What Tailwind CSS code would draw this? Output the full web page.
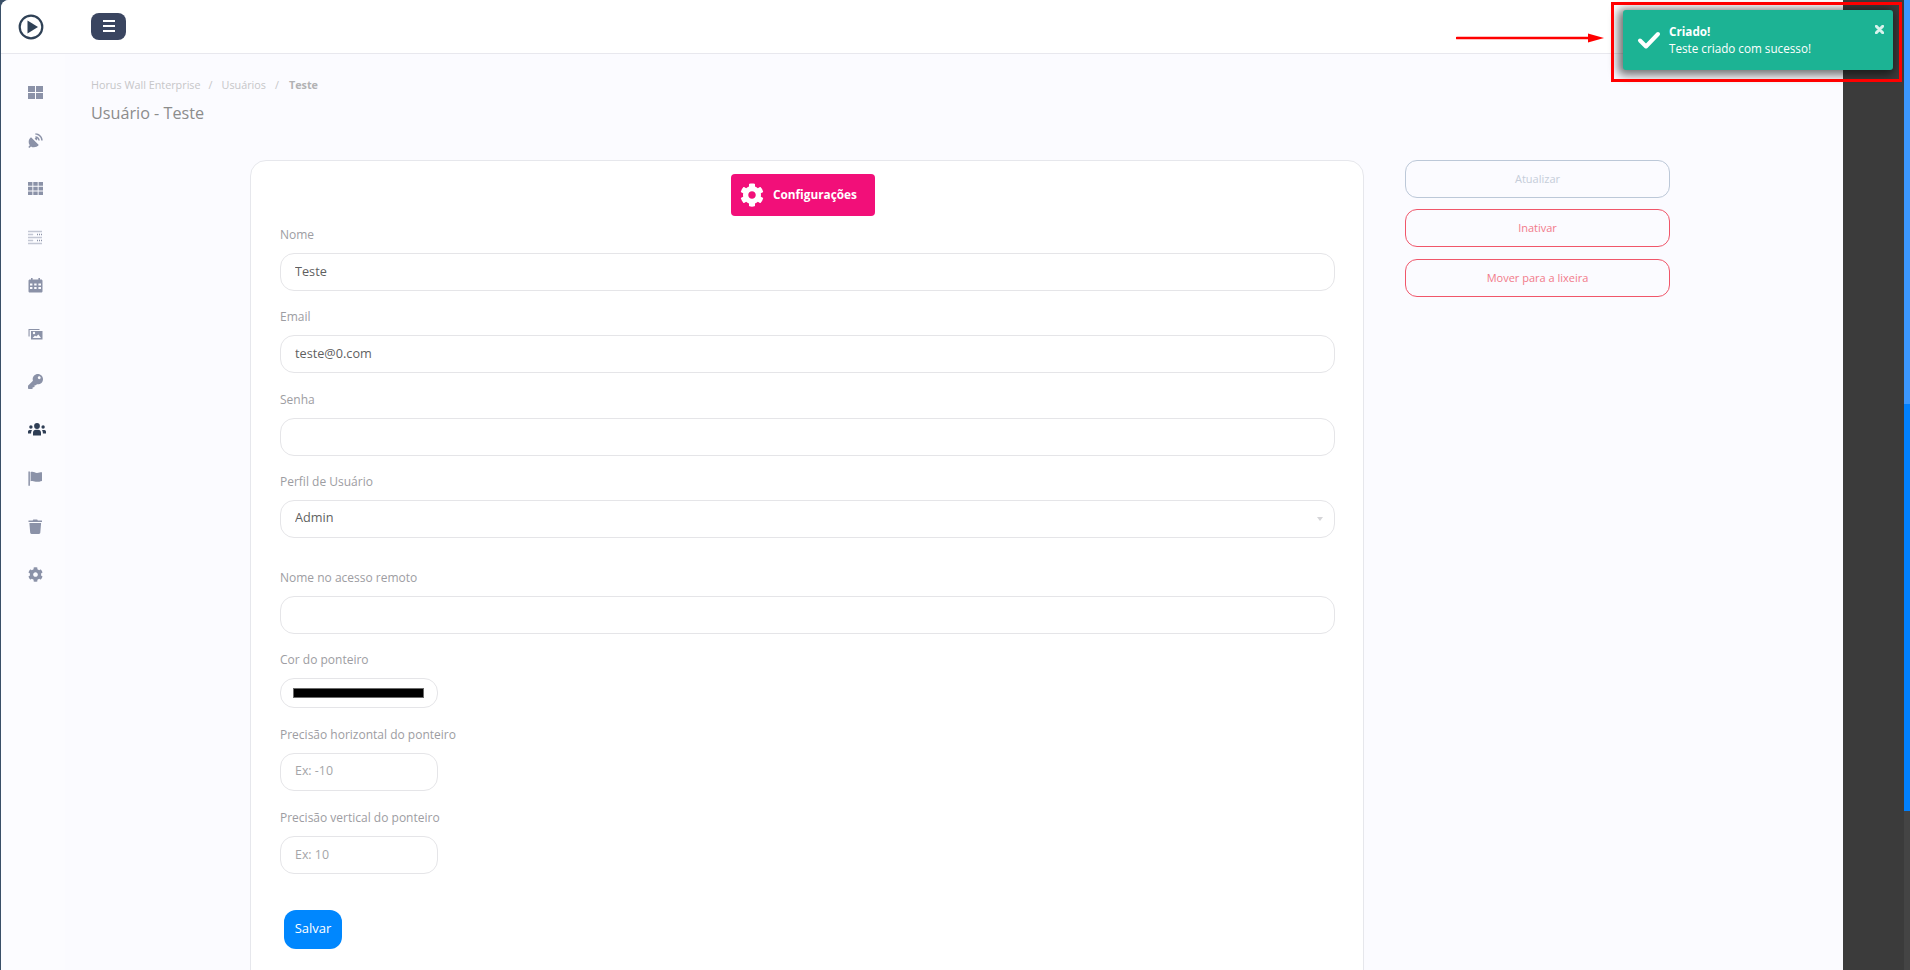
<!DOCTYPE html>
<html lang="pt-BR">
  <head>
    <meta charset="UTF-8" />
    <meta name="viewport" content="width=device-width, initial-scale=1.0" />
    <title>Usuário - Teste</title>
    <script src="https://cdn.jsdelivr.net/npm/@tailwindcss/browser@4"></script>
  </head>
  <body class="bg-[#3a5068] font-['Open_Sans',sans-serif] overflow-hidden">
    <div class="relative flex h-[970px] w-[1910px] overflow-hidden">
      <!-- pagina -->
      <div class="ml-px flex w-[1842px] flex-col overflow-hidden rounded-tl-lg bg-[#fbfbff]">
        <header class="flex h-[54px] shrink-0 items-center border-b border-[#e8e8ee] bg-white">
          <div class="flex w-[90px] pl-[17px]">
            <svg class="h-[26px] w-[26px]" viewBox="0 0 26 26">
              <circle cx="13" cy="13" r="11.3" fill="none" stroke="#2f4156" stroke-width="2.2" />
              <path d="M9.5 6.5 L20 13 L9.5 19.5 Z" fill="#2f4156" />
            </svg>
          </div>
          <button class="mb-[1px] flex h-[27px] w-[35px] flex-col items-center justify-center gap-[3px] rounded-lg bg-[#3a4560]">
            <span class="h-[2px] w-[12px] bg-white"></span>
            <span class="h-[2px] w-[12px] bg-white"></span>
            <span class="h-[2px] w-[12px] bg-white"></span>
          </button>
        </header>

        <div class="flex min-h-0 flex-1">
          <!-- sidebar -->
          <nav class="flex w-[64px] shrink-0 flex-col gap-[33.2px] bg-[#fcfcff] pl-[27px] pt-[31px] text-[#8b92a8]">
            <svg class="h-[15px] w-[15px]" viewBox="0 0 15 15" fill="currentColor"><path d="M0 1h7v6H0zM8 1h7v6H8zM0 8h7v6H0zM8 8h7v6H8z" /></svg>
            <svg class="h-[15px] w-[15px]" viewBox="0 0 15 15" fill="currentColor">
              <path d="M3 4.2 10.8 12C8.8 14.3 5.3 15 3 13.4L1.4 15 .3 14 1.8 12.3C-.2 9.6.6 6 3 4.2z" />
              <path d="M6.6 5.6 8.3 4.4 9.6 5.7 8.4 7.4z" />
              <path d="M7.4.3c4 0 7.3 3.3 7.3 7.3h-1.5c0-3.2-2.6-5.8-5.8-5.8z" />
              <path d="M7.4 3.2c2.4 0 4.4 2 4.4 4.4h-1.5c0-1.6-1.3-2.9-2.9-2.9z" />
            </svg>
            <svg class="h-[15px] w-[15px]" viewBox="0 0 15 15" fill="currentColor"><path d="M0 1h4.4v3.8H0zM5.3 1h4.4v3.8H5.3zM10.6 1H15v3.8h-4.4zM0 5.7h4.4v3.8H0zM5.3 5.7h4.4v3.8H5.3zM10.6 5.7H15v3.8h-4.4zM0 10.4h4.4v3.6H0zM5.3 10.4h4.4v3.6H5.3zM10.6 10.4H15v3.6h-4.4z" /></svg>
            <svg class="h-[15px] w-[15px]" viewBox="0 0 15 15" fill="none" stroke="currentColor" stroke-width="1.4" stroke-dasharray="1 1"><path d="M.5 1.5h13.6M.5 4.5h4.6M9 4.5h5M.5 7.5h13.6M.5 10.5h4.6M9 10.5h5M.5 13.5h13.6" /></svg>
            <svg class="h-[15px] w-[15px]" viewBox="0 0 15 15" fill="currentColor">
              <path fill-rule="evenodd" d="M3 0h1.6v1.6h5.8V0H12v1.6h1.2c.7 0 1.3.6 1.3 1.3v10.3c0 .7-.6 1.3-1.3 1.3H1.8c-.7 0-1.3-.6-1.3-1.3V2.9c0-.7.6-1.3 1.3-1.3H3zM2 5.4v2h2.4v-2zm4.2 0v2h2.4v-2zm4.2 0v2H13v-2zM2 9v2h2.4V9zm4.2 0v2h2.4V9zm4.2 0v2H13V9z" />
            </svg>
            <svg class="h-[15px] w-[15px]" viewBox="0 0 15 15" fill="currentColor">
              <path d="M.5 3h11v1H1.6v6.5H.5z" />
              <path fill-rule="evenodd" d="M3 5h11.5v8.5H3zm1.6 7h8.4L10.4 8.4 8.2 10.6 7 9.6zM6 8.2a1.2 1.2 0 1 0 0-2.4 1.2 1.2 0 0 0 0 2.4z" />
            </svg>
            <svg class="h-[15px] w-[15px]" viewBox="0 0 512 512" fill="currentColor"><path d="M512 176.001C512 273.203 433.202 352 336 352c-11.22 0-22.19-1.062-32.827-3.069l-24.012 27.014A23.999 23.999 0 0 1 261.223 384H224v40c0 13.255-10.745 24-24 24h-40v40c0 13.255-10.745 24-24 24H24c-13.255 0-24-10.745-24-24v-78.059c0-6.365 2.529-12.47 7.029-16.971l161.802-161.802C163.108 213.814 160 195.271 160 176 160 78.798 238.797.001 335.999 0 433.488-.001 512 78.511 512 176.001zM336 128c0 26.51 21.49 48 48 48s48-21.49 48-48-21.49-48-48-48-48 21.49-48 48z" /></svg>
            <svg class="h-[15px] w-[18px]" viewBox="0 0 18 15" fill="#2f3e55">
              <circle cx="9" cy="4" r="2.9" /><circle cx="2.9" cy="5" r="1.7" /><circle cx="15.1" cy="5" r="1.7" />
              <path d="M5 13.5v-2.7C5 9 6.2 7.8 8 7.8h2c1.8 0 3 1.2 3 3v2.7zM0 11.5V9.8c0-.9.7-1.7 1.6-1.7h1.3c.4 0 .8.1 1.1.4-.7.7-.9 1.4-.9 3zM18 11.5V9.8c0-.9-.7-1.7-1.6-1.7h-1.3c-.4 0-.8.1-1.1.4.7.7.9 1.4.9 3z" />
            </svg>
            <svg class="h-[15px] w-[15px]" viewBox="0 0 15 15" fill="currentColor"><path d="M.4.4h1.5v14.3H.4zM2.6 1.1c2.8-1 4.1.8 6.4.8 1.8 0 3-.6 5-.6v8.6c-2 .5-3.2.9-5 .9-2.3 0-3.6-1.4-6.4-.6z" /></svg>
            <svg class="h-[15px] w-[15px]" viewBox="0 0 15 15" fill="currentColor"><path d="M.5 1.6h4.2L5.3.4h3.9l.6 1.2h4.2v1.5H.5zM1.4 4.1h11.7l-.8 9.7c-.1.7-.6 1.2-1.3 1.2H3.5c-.7 0-1.2-.5-1.3-1.2z" /></svg>
            <svg class="h-[15px] w-[15px]" viewBox="0 0 512 512" fill="currentColor"><path d="M487.4 315.7l-42.6-24.6c4.3-23.2 4.3-47 0-70.2l42.6-24.6c4.9-2.8 7.1-8.6 5.5-14-11.1-35.6-30-67.8-54.7-94.6-3.8-4.1-10-5.1-14.8-2.3L380.8 110c-17.9-15.4-38.5-27.3-60.8-35.1V25.8c0-5.6-3.9-10.5-9.4-11.7-36.7-8.2-74.3-7.8-109.2 0-5.5 1.2-9.4 6.1-9.4 11.7V75c-22.2 7.9-42.8 19.8-60.8 35.1L88.7 85.5c-4.9-2.8-11-1.9-14.8 2.3-24.7 26.7-43.6 58.9-54.7 94.6-1.7 5.4.6 11.2 5.5 14L67.3 221c-4.3 23.2-4.3 47 0 70.2l-42.6 24.6c-4.9 2.8-7.1 8.6-5.5 14 11.1 35.6 30 67.8 54.7 94.6 3.8 4.1 10 5.1 14.8 2.3l42.6-24.6c17.9 15.4 38.5 27.3 60.8 35.1v49.2c0 5.6 3.9 10.5 9.4 11.7 36.7 8.2 74.3 7.8 109.2 0 5.5-1.2 9.4-6.1 9.4-11.7v-49.2c22.2-7.9 42.8-19.8 60.8-35.1l42.6 24.6c4.9 2.8 11 1.9 14.8-2.3 24.7-26.7 43.6-58.9 54.7-94.6 1.5-5.5-.7-11.3-5.6-14.1zM256 336c-44.1 0-80-35.9-80-80s35.9-80 80-80 80 35.9 80 80-35.9 80-80 80z" /></svg>
          </nav>

          <!-- conteudo -->
          <main class="min-w-0 flex-1 pl-[26px]">
            <div class="mt-[23px] flex h-[16px] items-center text-[10.8px] text-[#c6c6c8]">
              <span>Horus Wall Enterprise</span>
              <span class="ml-[8px]">/</span>
              <span class="ml-[9px]">Usuários</span>
              <span class="ml-[9px]">/</span>
              <span class="ml-[10px] font-bold text-[#b2b2b4]">Teste</span>
            </div>
            <h1 class="mt-[8px] h-[24px] text-[16.2px] leading-[24px] text-[#8c8c8c]">Usuário - Teste</h1>

            <div class="ml-[159px] mt-[35px] flex items-start gap-[41px]">
              <!-- card -->
              <section class="h-[900px] w-[1114px] shrink-0 rounded-t-2xl border border-[#e6e7ec] bg-white pl-[29px] pr-[28px] pt-[13px] text-[12px]">
                <div class="flex justify-center">
                  <button class="-ml-[9px] flex h-[42px] w-[144px] items-center rounded-[4px] bg-[#f20f79] pl-[9px] text-[11.8px] font-bold text-white">
                    <svg class="h-[24px] w-[24px]" viewBox="0 0 512 512" fill="currentColor"><path d="M487.4 315.7l-42.6-24.6c4.3-23.2 4.3-47 0-70.2l42.6-24.6c4.9-2.8 7.1-8.6 5.5-14-11.1-35.6-30-67.8-54.7-94.6-3.8-4.1-10-5.1-14.8-2.3L380.8 110c-17.9-15.4-38.5-27.3-60.8-35.1V25.8c0-5.6-3.9-10.5-9.4-11.7-36.7-8.2-74.3-7.8-109.2 0-5.5 1.2-9.4 6.1-9.4 11.7V75c-22.2 7.9-42.8 19.8-60.8 35.1L88.7 85.5c-4.9-2.8-11-1.9-14.8 2.3-24.7 26.7-43.6 58.9-54.7 94.6-1.7 5.4.6 11.2 5.5 14L67.3 221c-4.3 23.2-4.3 47 0 70.2l-42.6 24.6c-4.9 2.8-7.1 8.6-5.5 14 11.1 35.6 30 67.8 54.7 94.6 3.8 4.1 10 5.1 14.8 2.3l42.6-24.6c17.9 15.4 38.5 27.3 60.8 35.1v49.2c0 5.6 3.9 10.5 9.4 11.7 36.7 8.2 74.3 7.8 109.2 0 5.5-1.2 9.4-6.1 9.4-11.7v-49.2c22.2-7.9 42.8-19.8 60.8-35.1l42.6 24.6c4.9 2.8 11 1.9 14.8-2.3 24.7-26.7 43.6-58.9 54.7-94.6 1.5-5.5-.7-11.3-5.6-14.1zM256 336c-44.1 0-80-35.9-80-80s35.9-80 80-80 80 35.9 80 80-35.9 80-80 80z" /></svg>
                    <span class="ml-[9px]">Configurações</span>
                  </button>
                </div>

                <form class="mt-[8.5px] text-[#9d9da2]">
                  <label class="block h-[20px] leading-[20px]">Nome</label>
                  <input class="mt-[8px] block h-[38px] w-full rounded-[14px] border border-[#e5e5e8] bg-white px-[14px] pb-[2px] text-[12.7px] text-[#5f5f5f] outline-none" value="Teste" />

                  <label class="mt-[16.5px] block h-[20px] leading-[20px]">Email</label>
                  <input class="mt-[8px] block h-[38px] w-full rounded-[14px] border border-[#e5e5e8] bg-white px-[14px] pb-[2px] text-[12.7px] text-[#5f5f5f] outline-none" value="teste@0.com" />

                  <label class="mt-[16.5px] block h-[20px] leading-[20px]">Senha</label>
                  <input type="password" class="mt-[8px] block h-[38px] w-full rounded-[14px] border border-[#e5e5e8] bg-white px-[14px] pb-[2px] text-[12.7px] text-[#5f5f5f] outline-none" />

                  <label class="mt-[16.5px] block h-[20px] leading-[20px]">Perfil de Usuário</label>
                  <div class="relative mt-[8px]">
                    <select class="block h-[38px] w-full appearance-none rounded-[14px] border border-[#e5e5e8] bg-white px-[14px] pb-[2px] text-[12.7px] text-[#5f5f5f] outline-none">
                      <option>Admin</option>
                    </select>
                    <span class="absolute right-[12px] top-[17px] h-0 w-0 border-x-[3px] border-t-[4px] border-x-transparent border-t-[#d5d5d8]"></span>
                  </div>

                  <label class="mt-[30px] block h-[20px] leading-[20px]">Nome no acesso remoto</label>
                  <input class="mt-[8px] block h-[38px] w-full rounded-[14px] border border-[#e5e5e8] bg-white px-[14px] pb-[2px] text-[12.7px] text-[#5f5f5f] outline-none" />

                  <label class="mt-[16px] block h-[20px] leading-[20px]">Cor do ponteiro</label>
                  <div class="mt-[8px] flex h-[30px] w-[158px] items-center justify-center rounded-[14px] border border-[#e5e5e8] bg-white pr-[2px]">
                    <span class="h-[10px] w-[131px] border border-[#6b6b6b] bg-black"></span>
                  </div>

                  <label class="mt-[16.5px] block h-[20px] leading-[20px]">Precisão horizontal do ponteiro</label>
                  <input class="mt-[8px] block h-[38px] w-[158px] rounded-[14px] border border-[#e5e5e8] bg-white px-[14px] pb-[2px] text-[12.4px] outline-none placeholder:text-[#a5a5a8]" placeholder="Ex: -10" />

                  <label class="mt-[17.5px] block h-[20px] leading-[20px]">Precisão vertical do ponteiro</label>
                  <input class="mt-[8px] block h-[38px] w-[158px] rounded-[14px] border border-[#e5e5e8] bg-white px-[14px] pb-[2px] text-[12.4px] outline-none placeholder:text-[#a5a5a8]" placeholder="Ex: 10" />

                  <button type="button" class="ml-[4px] mt-[36px] h-[39px] w-[58px] rounded-xl bg-[#0087fe] pb-[2px] text-[13px] font-medium text-white">Salvar</button>
                </form>
              </section>

              <!-- acoes -->
              <aside class="flex w-[265px] shrink-0 flex-col gap-[11px] text-[11px]">
                <button class="h-[38px] rounded-xl border border-[#bcc8d8] text-[#c5cdd9]">Atualizar</button>
                <button class="h-[38px] rounded-xl border border-[#f0566a] text-[#f27a8a]">Inativar</button>
                <button class="mt-px h-[38px] rounded-xl border border-[#f0566a] text-[#f27a8a]">Mover para a lixeira</button>
              </aside>
            </div>
          </main>
        </div>
      </div>

      <!-- painel escuro e barra de rolagem -->
      <div class="w-[61px] shrink-0 bg-[#3b3b3b]"></div>
      <div class="flex w-[6px] shrink-0 flex-col bg-[#444444]">
        <div class="h-[404px] bg-[#3b97ff]"></div>
        <div class="h-[407px] bg-[#0080ff]"></div>
      </div>

      <!-- toast -->
      <div class="absolute left-[1623px] top-[10px] flex h-[60px] w-[270px] items-center rounded-[3px] bg-[#1cb394] pl-[14px] text-[11.7px] leading-[17px] text-white shadow-[-2px_2px_10px_3px_rgba(0,0,0,0.55)]">
        <svg class="h-[20px] w-[24px]" viewBox="0 0 23 20" fill="none" stroke="white" stroke-width="4" stroke-linecap="round" stroke-linejoin="round"><path d="M2.5 10.5 8.5 16.5 20.5 4" /></svg>
        <div class="ml-[8px]">
          <div class="font-bold">Criado!</div>
          <div>Teste criado com sucesso!</div>
        </div>
        <svg class="absolute right-[9px] top-[15px] h-[9px] w-[9px]" viewBox="0 0 9 9" fill="none" stroke="#d8f2ec" stroke-width="3" stroke-linecap="round"><path d="M1.3 1.3 7.7 7.7M7.7 1.3 1.3 7.7" /></svg>
      </div>

      <!-- anotacao vermelha -->
      <div class="pointer-events-none absolute left-[1611px] top-[2px] h-[80px] w-[291px] border-[3px] border-[#ff0000]"></div>
      <svg class="absolute left-[1456px] top-[32px] h-[12px] w-[150px]" viewBox="0 0 150 12">
        <path d="M1 6H134" stroke="#ff0000" stroke-width="2.6" stroke-linecap="round" />
        <path d="M132 1.5 148 6 132 10.5Z" fill="#ff0000" />
      </svg>
    </div>
  </body>
</html>
